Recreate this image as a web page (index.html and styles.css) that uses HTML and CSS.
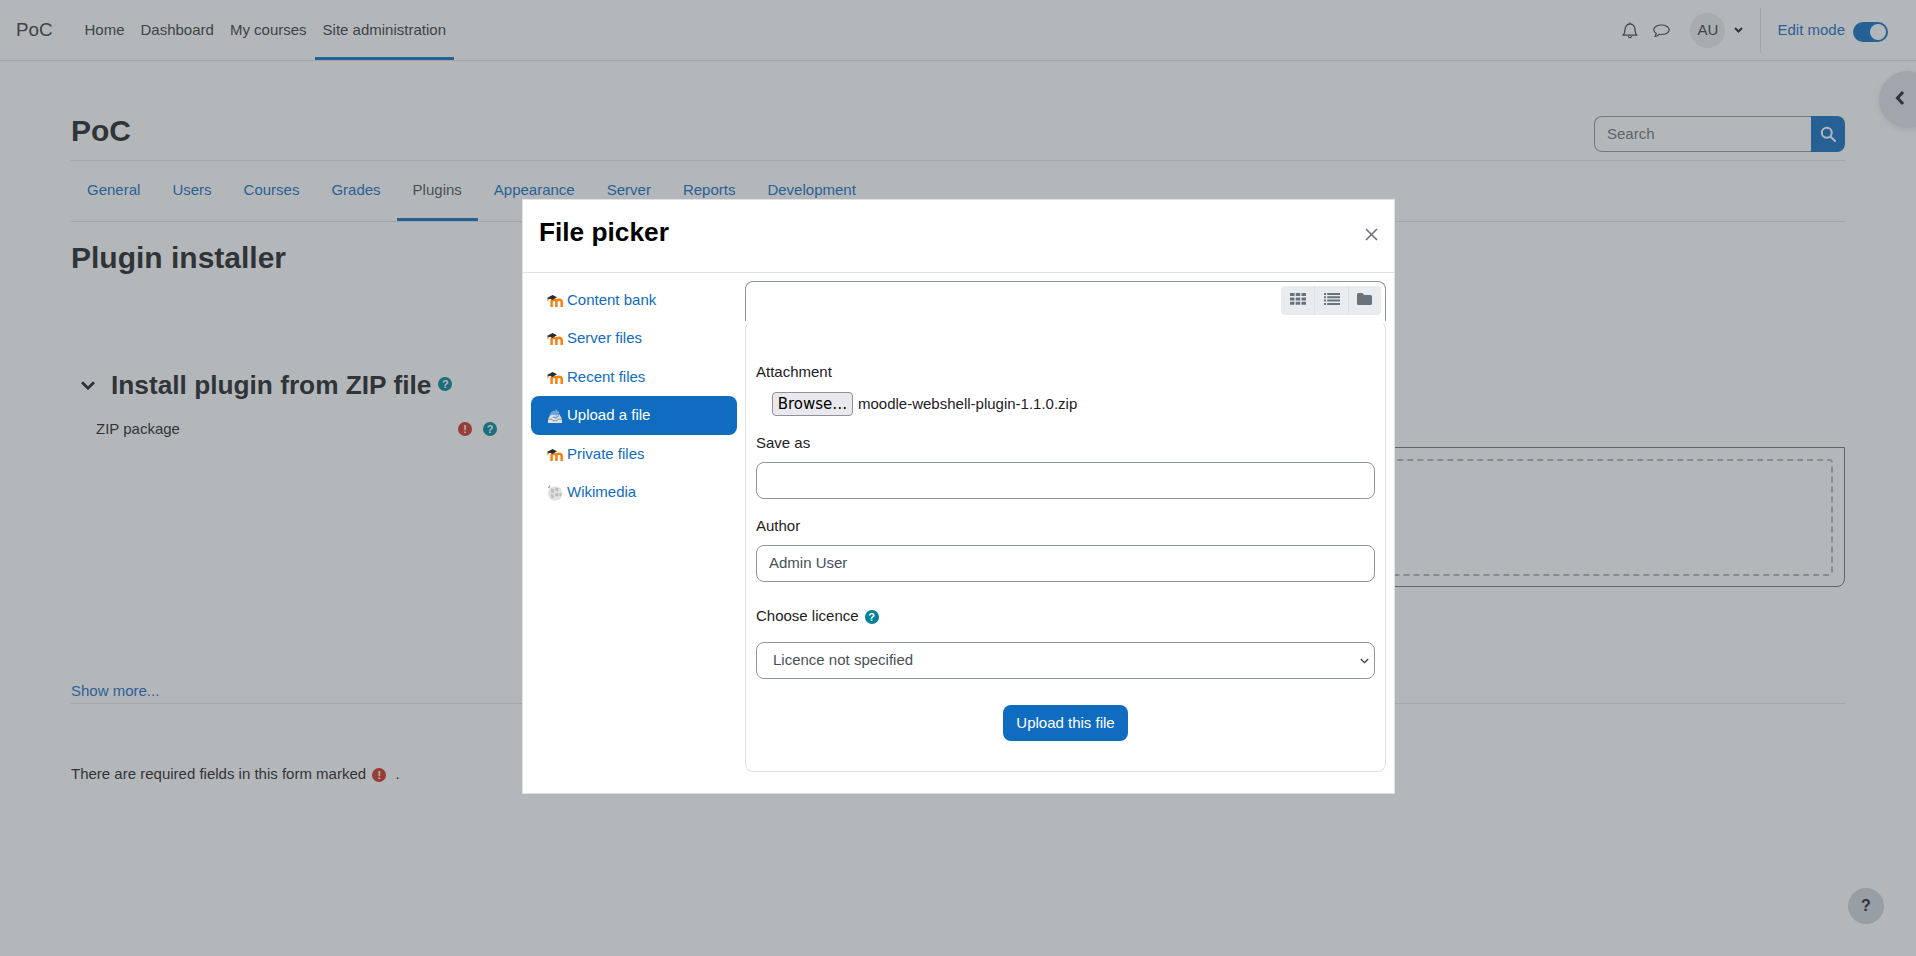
FILE: index.html
```html
<!DOCTYPE html>
<html lang="en">
  <head>
    <meta charset="utf-8"/>
    <title>PoC: Plugin installer</title>
    <link rel="stylesheet" href="styles.css">
  </head>
  <body>
    <svg class="icon_defs" width="0" height="0" aria-hidden="true">
      <symbol id="moodle" viewBox="0 0 16 16">
        <path d="M4.600 14V8c1.300-1.900 4.300-1.800 4.800.4V14M9.400 8.400c.7-2.100 4.800-2.200 5.300.4V14" fill="none" stroke="#f98012" stroke-width="2.500"/>
        <path d="M0 5 5.600 2 10 4.200 5.200 7 3.200 5.800 1.600 6.400z" fill="#2b2b2b"/>
        <path d="M.9 5.400v2.800" stroke="#f98012" stroke-width="1" fill="none"/>
      </symbol>
    </svg>

    <header class="navbar">
      <a class="navbar__brand">PoC</a>
      <nav class="navbar__links">
        <a class="navbar__link">Home</a>
        <a class="navbar__link">Dashboard</a>
        <a class="navbar__link">My courses</a>
        <a class="navbar__link navbar__link--active">Site administration</a>
      </nav>
      <div class="navbar__tools">
        <svg class="navbar__bell" width="16" height="17" viewBox="0 0 16 17" fill="none" stroke="#1d2125" stroke-width="1.300">
          <path d="M1 13.200c1.600-1.400 2-2.600 2-5.400C3 4.400 5 2 8 2s5 2.400 5 5.800c0 2.800.4 4 2 5.400z" stroke-linejoin="round"/>
          <path d="M8 .6V2M6.400 14.200c.2 2 3 2 3.200 0"/>
        </svg>
        <svg class="navbar__chat" width="17" height="14" viewBox="0 0 17 14" fill="none" stroke="#1d2125" stroke-width="1.200">
          <path d="M8.500 1C4.300 1 .8 3 .8 5.800c0 1.500 1 2.700 2.400 3.500-.2 1.300-.8 2.400-1.200 3.200 1.500-.2 3-1.200 4-2.200.8.100 1.600.2 2.500.2 4.200 0 7.700-2 7.700-4.700S12.700 1 8.500 1z" stroke-linejoin="round"/>
        </svg>
        <span class="navbar__avatar">AU</span>
        <svg class="navbar__caret" width="9" height="6" viewBox="0 0 9 6" fill="none" stroke="#1d2125" stroke-width="2">
          <path d="M1 1l3.500 3.500L8 1"/>
        </svg>
        <div class="navbar__edit">
          <a class="navbar__editlabel">Edit mode</a>
          <span class="toggle"><span class="toggle__knob"></span></span>
        </div>
      </div>
    </header>

    <main class="page">
      <div class="page__header">
        <h1 class="page__title">PoC</h1>
        <div class="search">
          <input class="search__input" type="text" placeholder="Search">
          <button type="button" class="search__button">
            <svg width="16" height="16" viewBox="0 0 16 16" fill="none" stroke="#fff" stroke-width="2">
              <circle cx="6.800" cy="6.800" r="5"/>
              <path d="M10.500 10.500 15 15" stroke-linecap="round"/>
            </svg>
          </button>
        </div>
      </div>

      <nav class="tabs">
        <a class="tabs__item">General</a>
        <a class="tabs__item">Users</a>
        <a class="tabs__item">Courses</a>
        <a class="tabs__item">Grades</a>
        <a class="tabs__item tabs__item--active">Plugins</a>
        <a class="tabs__item">Appearance</a>
        <a class="tabs__item">Server</a>
        <a class="tabs__item">Reports</a>
        <a class="tabs__item">Development</a>
      </nav>

      <h2 class="page__subtitle">Plugin installer</h2>

      <div class="section">
        <svg class="section__chevron" width="14" height="9" viewBox="0 0 14 9" fill="none" stroke="#1d2125" stroke-width="2.800">
          <path d="M1 1.200l6 6 6-6"/>
        </svg>
        <h3 class="section__title">Install plugin from ZIP file</h3>
        <span class="badge badge--help section__help">?</span>
      </div>

      <div class="field">
        <div class="field__label">
          <span>ZIP package</span>
          <span class="field__icons">
            <span class="badge badge--error">!</span>
            <span class="badge badge--help">?</span>
          </span>
        </div>
        <div class="dropbox"><div class="dropbox__inner"></div></div>
      </div>

      <div class="more"><a class="more__link">Show more...</a></div>

      <p class="required">There are required fields in this form marked <span class="badge badge--error badge--inline">!</span> <span class="required__dot">.</span></p>
    </main>

    <div class="drawer_toggle">
      <svg width="10" height="16" viewBox="0 0 10 16" fill="none" stroke="#1d2125" stroke-width="3">
        <path d="M8 2 2.500 8 8 14"/>
      </svg>
    </div>
    <div class="help_button">?</div>

    <div class="backdrop"></div>

    <div class="picker">
      <div class="picker__header">
        <h4 class="picker__title">File picker</h4>
        <svg class="picker__close" width="13" height="13" viewBox="0 0 13 13" stroke="#6a737b" stroke-width="1.600">
          <path d="M1 1l11 11M12 1 1 12"/>
        </svg>
      </div>
      <div class="picker__body">
        <ul class="repos">
          <li class="repos__item"><svg class="repos__icon" width="16" height="16"><use href="#moodle"/></svg>Content bank</li>
          <li class="repos__item"><svg class="repos__icon" width="16" height="16"><use href="#moodle"/></svg>Server files</li>
          <li class="repos__item"><svg class="repos__icon" width="16" height="16"><use href="#moodle"/></svg>Recent files</li>
          <li class="repos__item repos__item--active">
            <svg class="repos__icon" width="16" height="16" viewBox="0 0 16 16">
              <path d="M3.500 6.500 1 11v4h14v-4l-2.500-4.500z" fill="#dfe3e6"/>
              <path d="M1 11.200h4l1 1.600h4l1-1.600h4" fill="none" stroke="#8d9499" stroke-width="1"/>
              <path d="M2.500 8C2.800 4.200 5.500 2 8.600 2.800L8.400 .8l4.200 3.700-3.800 3.900-.2-2.300C6.400 5.600 4.600 6.200 2.500 8z" fill="#6fa3d4"/>
              <path d="M6 9l3 1 3-2.500" fill="none" stroke="#6fa3d4" stroke-width="1.500"/>
            </svg>Upload a file</li>
          <li class="repos__item"><svg class="repos__icon" width="16" height="16"><use href="#moodle"/></svg>Private files</li>
          <li class="repos__item">
            <svg class="repos__icon" width="16" height="16" viewBox="0 0 16 16">
              <circle cx="8.200" cy="8.500" r="7.300" fill="#e2e2e2"/>
              <path d="M4 3.500l2.800.6.500 3.200-3 .9zM8.500 2.500l3 .8-.4 3-2.600-.3zM8.200 8l3.300.3-.3 3.200-3-.4zM3.500 9.500l3.300.3.200 3-2.500.6zM12.400 8l2.200.2-.5 3-1.900-.4z" fill="#bcbcbc"/>
              <path d="M1.500 3 3 .8" stroke="#8a8a8a" stroke-width="1.200"/>
            </svg>Wikimedia</li>
        </ul>

        <div class="panel">
          <div class="panel__toolbar">
            <div class="views">
              <span class="views__button">
                <svg width="16" height="12" viewBox="0 0 16 12" fill="#6a737b">
                  <path d="M0 0h4.500v3H0zM5.700 0h4.500v3H5.700zM11.500 0H16v3h-4.500zM0 4.400h4.500v3H0zM5.700 4.400h4.500v3H5.700zM11.500 4.400H16v3h-4.500zM0 8.800h4.500v3H0zM5.700 8.800h4.500v3H5.700zM11.500 8.800H16v3h-4.500z"/>
                </svg>
              </span>
              <span class="views__button">
                <svg width="16" height="12" viewBox="0 0 16 12" fill="#6a737b">
                  <path d="M0 0h2v2H0zM3.200 0H16v2H3.200zM0 3.300h2v2H0zM3.200 3.300H16v2H3.200zM0 6.600h2v2H0zM3.200 6.600H16v2H3.200zM0 9.900h2v2H0zM3.200 9.900H16v2H3.200z"/>
                </svg>
              </span>
              <span class="views__button">
                <svg width="15" height="12" viewBox="0 0 15 12" fill="#6a737b">
                  <path d="M1.500 0h4L7 2h6.500A1.500 1.500 0 0 1 15 3.500v7a1.500 1.500 0 0 1-1.500 1.500h-12A1.500 1.500 0 0 1 0 10.500v-9A1.500 1.500 0 0 1 1.500 0z"/>
                </svg>
              </span>
            </div>
          </div>

          <form class="upload">
            <label class="upload__label upload__label--first">Attachment</label>
            <div class="upload__file">
              <button type="button" class="upload__browse">Browse…</button>
              <span>moodle-webshell-plugin-1.1.0.zip</span>
            </div>
            <label class="upload__label">Save as</label>
            <input class="upload__input" type="text">
            <label class="upload__label">Author</label>
            <input class="upload__input" type="text" value="Admin User">
            <label class="upload__label upload__label--licence">Choose licence <span class="badge badge--help badge--inline">?</span></label>
            <div class="upload__select">
              <select class="upload__input upload__input--select">
                <option>Licence not specified</option>
              </select>
              <svg class="upload__arrow" width="9" height="6" viewBox="0 0 9 6" fill="none" stroke="#343a40" stroke-width="1.300">
                <path d="M.8 1l3.700 3.700L8.200 1"/>
              </svg>
            </div>
            <button type="button" class="upload__submit">Upload this file</button>
          </form>
        </div>
      </div>
    </div>
  </body>
</html>
```

FILE: styles.css
```css
* {
  box-sizing: border-box;
}

html,
body {
  height: 100%;
}

body {
  margin: 0;
  overflow: hidden;
  background: #FFF;
  color: #1d2125;
  font-family: "Liberation Sans", Arial, sans-serif;
  font-size: 15px;
  line-height: 22px;
}

.icon_defs {
  position: absolute;
}

/* top bar */
.navbar {
  display: flex;
  align-items: center;
  height: 61px;
  padding: 0 28px 0 16px;
  border-bottom: 1px solid #dee2e6;
  color: #343a40;
}

.navbar__brand {
  margin-right: 24px;
  font-size: 18.75px;
}

.navbar__links {
  display: flex;
  align-self: stretch;
}

.navbar__link {
  display: flex;
  align-items: center;
  height: 60px;
  padding: 0 8px 1px;
}

.navbar__link--active {
  border-bottom: 3px solid #0f6cbf;
  padding-top: 3px;
  padding-bottom: 1px;
}

.navbar__tools {
  display: flex;
  align-items: center;
  margin-left: auto;
}

.navbar__bell {
  opacity: 0.85;
}

.navbar__chat {
  margin-top: 2px;
  margin-left: 15px;
  opacity: 0.85;
}

.navbar__avatar {
  display: flex;
  align-items: center;
  justify-content: center;
  width: 35px;
  height: 35px;
  margin-left: 20px;
  background: #e9ecef;
  border-radius: 50%;
}

.navbar__caret {
  margin-left: 9px;
}

.navbar__edit {
  display: flex;
  align-items: center;
  height: 45px;
  margin-left: 17px;
  padding-left: 16px;
  border-left: 1px solid #dee2e6;
}

.navbar__editlabel {
  color: #0f6cbf;
}

.toggle {
  display: flex;
  align-items: center;
  width: 35px;
  height: 20px;
  margin-top: 3px;
  margin-left: 8px;
  padding-left: 17px;
  background: #0f6cbf;
  border-radius: 10px;
}

.toggle__knob {
  width: 16px;
  height: 16px;
  background: #FFF;
  border-radius: 50%;
}

/* page content */
.page {
  padding: 0 71px;
}

.page__header {
  display: flex;
  align-items: flex-start;
  justify-content: space-between;
  height: 100px;
  padding-top: 52px;
  border-bottom: 1px solid #dee2e6;
}

.page__title {
  margin: 0;
  font-size: 30px;
  font-weight: 700;
  line-height: 36px;
}

.search {
  display: flex;
  width: 251px;
  height: 36px;
  margin-top: 3px;
}

.search__input {
  flex: 1;
  min-width: 0;
  padding: 0 12px;
  border: 1px solid #8f959e;
  border-right: 0;
  border-radius: 8px 0 0 8px;
  font: inherit;
}

.search__input::placeholder {
  color: #6a737b;
  opacity: 1;
}

.search__button {
  display: flex;
  align-items: center;
  justify-content: center;
  width: 34px;
  padding: 0;
  background: #0f6cbf;
  border: 0;
  border-radius: 0 8px 8px 0;
}

.tabs {
  display: flex;
  height: 61px;
  border-bottom: 1px solid #dee2e6;
}

.tabs__item {
  display: flex;
  align-items: center;
  height: 60px;
  padding: 0 16px 3px;
  color: #0f6cbf;
}

.tabs__item--active {
  padding-bottom: 0;
  border-bottom: 3px solid #0f6cbf;
  color: #495057;
}

.page__subtitle {
  margin: 18px 0 0;
  font-size: 30px;
  font-weight: 700;
  line-height: 36px;
}

.section {
  display: flex;
  align-items: center;
  height: 32px;
  margin-top: 93px;
  padding-left: 10px;
}

.section__chevron {
  margin-right: 16px;
}

.section__title {
  margin: 0 7px 0 0;
  font-size: 26.25px;
  font-weight: 700;
  line-height: 32px;
}

.section__help {
  margin-top: -2px;
}

.badge {
  display: inline-flex;
  flex: none;
  align-items: center;
  justify-content: center;
  width: 14px;
  height: 14px;
  border-radius: 50%;
  color: #FFF;
  font-size: 11px;
  font-weight: 700;
  line-height: 14px;
}

.badge--inline {
  margin-left: 2px;
  vertical-align: 0;
}

.badge--help {
  background: #008196;
}

.badge--error {
  background: #ca3120;
}

.field {
  display: grid;
  grid-template-columns: 470px 1fr;
  margin-top: 16px;
}

.field__label {
  display: flex;
  width: 439px;
  height: 24px;
  align-items: center;
  padding-right: 13px;
  padding-left: 25px;
}

.field__icons {
  display: flex;
  gap: 11px;
  margin-left: auto;
}

.dropbox {
  height: 140px;
  margin-top: 30px;
  padding: 11px 11px 10px 12px;
  border: 1px solid #6a737b;
  border-radius: 0 0 8px 0;
}

.dropbox__inner {
  height: 100%;
  border: 2px dashed #adb5bd;
  border-radius: 4px;
}

.more {
  height: 24px;
  margin-top: 93px;
  border-bottom: 1px solid #dee2e6;
}

.more__link {
  color: #0f6cbf;
}

.required {
  margin: 59px 0 0;
}

.required__dot {
  margin-left: 5px;
}

.drawer_toggle {
  position: absolute;
  top: 71px;
  right: -20px;
  display: flex;
  align-items: center;
  width: 57px;
  height: 57px;
  padding-left: 16px;
  padding-bottom: 3px;
  background: #dee2e6;
  border-radius: 50%;
  box-shadow: 0 2px 6px rgba(0, 0, 0, 0.1);
}

.help_button {
  position: absolute;
  top: 888px;
  left: 1848px;
  width: 36px;
  height: 36px;
  background: #ced4da;
  border-radius: 50%;
  font-size: 16px;
  font-weight: 700;
  line-height: 36px;
  text-align: center;
}

.backdrop {
  position: absolute;
  top: 0;
  left: 0;
  width: 100%;
  height: 100%;
  background: #495057;
  opacity: 0.41;
}

/* file picker dialog */
.picker {
  position: absolute;
  top: 199px;
  left: 522px;
  display: flex;
  flex-direction: column;
  width: 873px;
  height: 595px;
  background: #FFF;
  border: 1px solid #dee2e6;
}

.picker__header {
  display: flex;
  flex: none;
  align-items: flex-start;
  justify-content: space-between;
  height: 73px;
  padding: 16px 16px 0;
  border-bottom: 1px solid #dee2e6;
}

.picker__title {
  margin: 0;
  color: #000;
  font-size: 26.25px;
  font-weight: 700;
  line-height: 32px;
}

.picker__close {
  margin-top: 12px;
}

.picker__body {
  display: flex;
  flex: 1;
  padding: 8px;
}

.repos {
  flex: none;
  width: 206px;
  margin: -0.5px 8px 0 0;
  padding: 0;
  list-style: none;
}

.repos__item {
  display: flex;
  align-items: center;
  height: 38.5px;
  padding-left: 16px;
  border-radius: 8px;
  color: #0f6cbf;
}

.repos__item--active {
  background: #0f6cbf;
  color: #FFF;
}

.repos__icon {
  flex: none;
  margin-top: 2px;
  margin-right: 4px;
}

.panel {
  flex: 1;
  display: flex;
  flex-direction: column;
  min-width: 0;
  height: 491px;
}

.panel__toolbar {
  display: flex;
  flex: none;
  justify-content: flex-end;
  height: 40px;
  padding: 4px 4px 0 0;
  border: 1px solid #8f959e;
  border-bottom: 0;
  border-radius: 8px 8px 0 0;
}

.views {
  display: flex;
  height: 29px;
  background: #e9ecef;
  border-radius: 4px;
}

.views__button {
  display: flex;
  align-items: center;
  justify-content: center;
  width: 33.3px;
  padding-bottom: 4px;
}

.views__button + .views__button {
  border-left: 1px solid #dee2e6;
}

.upload {
  flex: 1;
  display: flex;
  flex-direction: column;
  padding: 0 10px;
  background: #FFF;
  border: 1px solid #dee2e6;
  border-top-color: transparent;
  border-radius: 8px;
}

.upload__label {
  margin-top: 16px;
}

.upload__label--first {
  margin-top: 39px;
}

.upload__label--licence {
  margin-top: 23px;
}

.upload__file {
  display: flex;
  align-items: center;
  gap: 5px;
  height: 24px;
  margin-top: 9px;
  padding-left: 16px;
}

.upload__browse {
  width: 81px;
  height: 24px;
  padding: 0;
  background: #e9e9ed;
  border: 1px solid #8f8f9d;
  border-radius: 4px;
  color: #000;
  font-family: "DejaVu Sans", sans-serif;
  font-size: 15px;
}

.upload__input {
  width: 100%;
  height: 37px;
  margin-top: 8px;
  padding: 0 12px 2px;
  background: #FFF;
  border: 1px solid #8f959e;
  border-radius: 8px;
  font: inherit;
  color: #495057;
}

.upload__input--select {
  margin-top: 0;
  padding-left: 16px;
  appearance: none;
}

.upload__select {
  position: relative;
  margin-top: 15px;
}

.upload__arrow {
  position: absolute;
  top: 16px;
  right: 6px;
}

.upload__submit {
  align-self: center;
  width: 125px;
  height: 36px;
  margin-top: 26px;
  padding: 0;
  background: #0f6cbf;
  border: 0;
  border-radius: 8px;
  color: #FFF;
  font: inherit;
}
```
